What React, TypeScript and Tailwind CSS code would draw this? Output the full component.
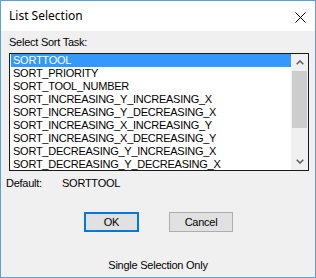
import React from "react";

const items = [
  "SORTTOOL",
  "SORT_PRIORITY",
  "SORT_TOOL_NUMBER",
  "SORT_INCREASING_Y_INCREASING_X",
  "SORT_INCREASING_Y_DECREASING_X",
  "SORT_INCREASING_X_INCREASING_Y",
  "SORT_INCREASING_X_DECREASING_Y",
  "SORT_DECREASING_Y_INCREASING_X",
  "SORT_DECREASING_Y_DECREASING_X",
];

const ui = "font-['Liberation_Sans',Arial,sans-serif] text-[11px] leading-[13px] tracking-[-0.25px] text-black";

export default function App() {
  return (
    <div className="w-[316px] h-[278px] border border-[#5f9fd8] flex flex-col bg-white overflow-hidden">
      <div className="h-[30px] shrink-0 bg-white flex items-center justify-between pl-[8px] pr-[9px]">
        <span className="font-['Noto_Sans',sans-serif] text-[12px] leading-[16px] text-black mt-[-1px]">List Selection</span>
        <svg width="11" height="11" viewBox="0 0 11 11" className="mt-[2px]">
          <path d="M0.5 0.5 L10.5 10.5 M10.5 0.5 L0.5 10.5" stroke="#000" strokeWidth="1" />
        </svg>
      </div>
      <div className={`flex-1 bg-[#f0f0f0] flex flex-col ${ui}`}>
        <div className="mt-[5px] pl-[8px] h-[13px]">Select Sort Task:</div>
        <div className="mt-[4px] ml-[8px] w-[300px] h-[118px] border border-[#1a1a1a] bg-white flex">
          <div className="flex-1 overflow-hidden pl-[1px]">
            {items.map((t, i) => (
              <div
                key={t}
                className={`h-[13px] pl-[2px] whitespace-nowrap ${i === 0 ? "bg-[#3399ff] text-white" : ""}`}
              >
                {t}
              </div>
            ))}
          </div>
          <div className="w-[17px] shrink-0 bg-[#f0f0f0] flex flex-col">
            <div className="h-[17px] flex items-center justify-center">
              <svg width="8" height="5" viewBox="0 0 8 5">
                <path d="M0.7 4.3 L4 1 L7.3 4.3" stroke="#606060" strokeWidth="1.6" fill="none" />
              </svg>
            </div>
            <div className="h-[57px] mx-[1px] bg-[#cdcdcd]" />
            <div className="flex-1" />
            <div className="h-[17px] flex items-center justify-center">
              <svg width="8" height="5" viewBox="0 0 8 5">
                <path d="M0.7 0.7 L4 4 L7.3 0.7" stroke="#606060" strokeWidth="1.6" fill="none" />
              </svg>
            </div>
          </div>
        </div>
        <div className="mt-[6px] pl-[5px] flex h-[13px]">
          <span className="w-[56px]">Default:</span>
          <span>SORTTOOL</span>
        </div>
        <div className="mt-[22px] ml-[83px] flex gap-[30px]">
          <button className="w-[55px] h-[20px] border-2 border-[#0078d7] bg-[#e1e1e1] flex items-center justify-center">
            OK
          </button>
          <button className="w-[64px] h-[20px] border border-[#adadad] bg-[#e1e1e1] flex items-center justify-center">
            Cancel
          </button>
        </div>
        <div className="mt-[27px] text-center h-[13px]">Single Selection Only</div>
      </div>
    </div>
  );
}
